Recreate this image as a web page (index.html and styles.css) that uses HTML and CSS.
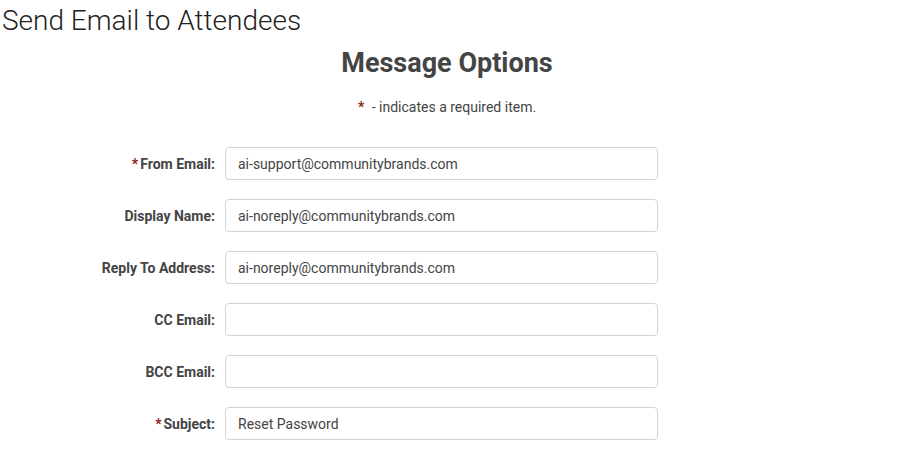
FILE: index.html
```html
<!DOCTYPE html>
<html lang="en">
<head>
<meta charset="UTF-8" />
<meta name="viewport" content="width=device-width, initial-scale=1" />
<title>Send Email to Attendees</title>
<link rel="stylesheet" href="styles.css">
</head>
<body>

  <h1 class="page-title">Send Email to Attendees</h1>

  <div class="options">
    <h2 class="options-title">Message Options</h2>
    <p class="required-note"><span class="req">*</span> - indicates a required item.</p>

    <form class="email-form">
      <label class="field-label" for="from-email"><span class="req">*</span>From Email:</label>
      <input class="field-input" type="text" id="from-email" value="ai-support@communitybrands.com" />

      <label class="field-label" for="display-name">Display Name:</label>
      <input class="field-input" type="text" id="display-name" value="ai-noreply@communitybrands.com" />

      <label class="field-label" for="reply-to">Reply To Address:</label>
      <input class="field-input" type="text" id="reply-to" value="ai-noreply@communitybrands.com" />

      <label class="field-label" for="cc-email">CC Email:</label>
      <input class="field-input" type="text" id="cc-email" value="" />

      <label class="field-label" for="bcc-email">BCC Email:</label>
      <input class="field-input" type="text" id="bcc-email" value="" />

      <label class="field-label" for="subject"><span class="req">*</span>Subject:</label>
      <input class="field-input" type="text" id="subject" value="Reset Password" />
    </form>
  </div>

</body>
</html>
```

FILE: styles.css
```css
:root {
  --texto: #444;
  --vermelho: #8b1c1c;
  --borda: #d4d4d4;
}

* {
  margin: 0;
  padding: 0;
  box-sizing: border-box;
  font-family: Roboto, 'Liberation Sans', sans-serif;
}

body {
  background-color: white;
  color: var(--texto);
}

/* Titulo da pagina */
.page-title {
  font-weight: 300;
  font-size: 28px;
  line-height: 40px;
  color: #222;
  padding-left: 2px;
  padding-top: 1px;
}

/* Opcoes */
.options {
  width: 894px;
}

.options-title {
  text-align: center;
  font-size: 27px;
  font-weight: 700;
  line-height: 30px;
  margin-top: 7px;
  color: var(--texto);
}

.required-note {
  text-align: center;
  font-size: 14px;
  margin-top: 21px;
  color: var(--texto);
}

.req {
  color: var(--vermelho);
  font-weight: 700;
  margin-right: 2px;
}

.required-note .req {
  margin-right: 4px;
}

/* Formulario */
.email-form {
  display: grid;
  grid-template-columns: 215px 433px;
  column-gap: 10px;
  row-gap: 19px;
  align-items: center;
  margin-top: 32px;
}

.field-label {
  text-align: right;
  font-size: 14px;
  font-weight: 700;
  color: var(--texto);
}

.field-input {
  height: 33px;
  border: 1px solid var(--borda);
  border-radius: 4px;
  padding: 0 12px;
  font-size: 14px;
  color: var(--texto);
  background: white;
}
```
